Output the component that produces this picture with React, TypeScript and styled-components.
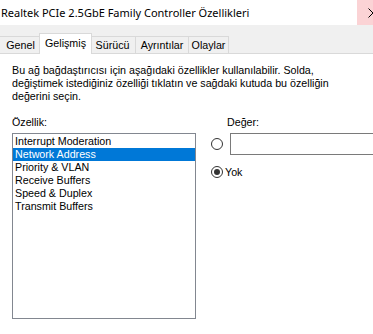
import React from "react";
import styled, { createGlobalStyle } from "styled-components";

const GlobalStyle = createGlobalStyle`
  html, body {
    margin: 0;
    padding: 0;
    background: #fff;
    overflow: hidden;
  }
  body {
    font-family: "Liberation Sans", Arial, sans-serif;
    font-size: 10.7px;
    color: #000;
  }
`;

const Window = styled.div`
  width: 389px;
  height: 334px;
  display: flex;
  flex-direction: column;
  background: #f0f0f0;
`;

const TitleBar = styled.div`
  height: 25px;
  flex: none;
  display: flex;
  align-items: center;
  background: #fff;
`;

const Title = styled.div`
  flex: 1;
  padding-left: 1px;
  font-family: "Noto Sans", sans-serif;
  font-size: 11px;
  white-space: nowrap;
`;

const CloseButton = styled.div`
  width: 32px;
  height: 25px;
  flex: none;
  display: flex;
  align-items: center;
  justify-content: center;
  background: #fbd3d5;
`;

const TabStrip = styled.div`
  height: 28px;
  flex: none;
  display: flex;
  align-items: flex-end;
  border-bottom: 1px solid #d9d9d9;
`;

// $width is the slot a tab takes; the active one grows 2px into each neighbour
const Tab = styled.div<{ $active?: boolean; $width: number }>`
  box-sizing: border-box;
  flex: none;
  width: ${(p) => (p.$active ? p.$width + 4 : p.$width)}px;
  height: ${(p) => (p.$active ? "21px" : "17px")};
  margin: ${(p) => (p.$active ? "0 -2px -1px -3px" : "0 0 0 -1px")};
  padding-bottom: ${(p) => (p.$active ? "3px" : "0")};
  display: flex;
  align-items: center;
  justify-content: center;
  border: 1px solid #d9d9d9;
  border-bottom: none;
  background: ${(p) => (p.$active ? "#fff" : "#f0f0f0")};
  position: relative;
  z-index: ${(p) => (p.$active ? 1 : 0)};
  white-space: nowrap;
`;

const Page = styled.div`
  flex: 1;
  background: #fff;
  padding: 10px 0 0 12px;
`;

const Intro = styled.p`
  margin: 0;
  line-height: 13px;
  white-space: nowrap;
`;

const Columns = styled.div`
  display: grid;
  grid-template-columns: 184px 1fr;
  column-gap: 15px;
  margin-top: 13px;
`;

const Column = styled.div`
  display: flex;
  flex-direction: column;
`;

const Label = styled.div<{ $indent?: number }>`
  height: 13px;
  line-height: 13px;
  padding-left: ${(p) => p.$indent ?? 0}px;
`;

const ListBox = styled.div`
  box-sizing: border-box;
  margin-top: 4px;
  height: 186px;
  border: 1px solid #828790;
  padding-top: 1px;
`;

const ListItem = styled.div<{ $selected?: boolean }>`
  height: 13px;
  line-height: 13px;
  padding-left: 2px;
  white-space: nowrap;
  background: ${(p) => (p.$selected ? "#0078d7" : "transparent")};
  color: ${(p) => (p.$selected ? "#fff" : "#000")};
`;

const OptionRow = styled.div<{ $gap: number; $top: number }>`
  display: flex;
  align-items: center;
  gap: ${(p) => p.$gap}px;
  margin-top: ${(p) => p.$top}px;
`;

const Radio = styled.span<{ $checked?: boolean }>`
  box-sizing: border-box;
  width: 12px;
  height: 12px;
  flex: none;
  border: 1px solid #333;
  border-radius: 50%;
  background: #fff;
  display: flex;
  align-items: center;
  justify-content: center;
  &::after {
    content: "";
    display: ${(p) => (p.$checked ? "block" : "none")};
    width: 6px;
    height: 6px;
    border-radius: 50%;
    background: #333;
  }
`;

const TextBox = styled.div`
  box-sizing: border-box;
  flex: 1;
  height: 22px;
  border: 1px solid #7a7a7a;
  background: #fff;
`;

const tabs = [
  { label: "Genel", width: 43 },
  { label: "Gelişmiş", width: 49 },
  { label: "Sürücü", width: 47 },
  { label: "Ayrıntılar", width: 54 },
  { label: "Olaylar", width: 41 },
];

const properties = [
  "Interrupt Moderation",
  "Network Address",
  "Priority & VLAN",
  "Receive Buffers",
  "Speed & Duplex",
  "Transmit Buffers",
];

export default function App() {
  return (
    <>
      <GlobalStyle />
      <Window>
        <TitleBar>
          <Title>Realtek PCIe 2.5GbE Family Controller Özellikleri</Title>
          <CloseButton>
            <svg width="10" height="10" viewBox="0 0 10 10">
              <path d="M0.5 0.5 L9.5 9.5 M9.5 0.5 L0.5 9.5" stroke="#000" strokeWidth="1" />
            </svg>
          </CloseButton>
        </TitleBar>
        <TabStrip>
          {tabs.map((t) => (
            <Tab key={t.label} $width={t.width} $active={t.label === "Gelişmiş"}>
              {t.label}
            </Tab>
          ))}
        </TabStrip>
        <Page>
          <Intro>
            Bu ağ bağdaştırıcısı için aşağıdaki özellikler kullanılabilir. Solda,
            <br />
            değiştimek istediğiniz özelliği tıklatın ve sağdaki kutuda bu özelliğin
            <br />
            değerini seçin.
          </Intro>
          <Columns>
            <Column>
              <Label>Özellik:</Label>
              <ListBox>
                {properties.map((p) => (
                  <ListItem key={p} $selected={p === "Network Address"}>
                    {p}
                  </ListItem>
                ))}
              </ListBox>
            </Column>
            <Column>
              <Label $indent={16}>Değer:</Label>
              <OptionRow $gap={7} $top={4}>
                <Radio />
                <TextBox />
              </OptionRow>
              <OptionRow $gap={2} $top={11}>
                <Radio $checked />
                <span>Yok</span>
              </OptionRow>
            </Column>
          </Columns>
        </Page>
      </Window>
    </>
  );
}
